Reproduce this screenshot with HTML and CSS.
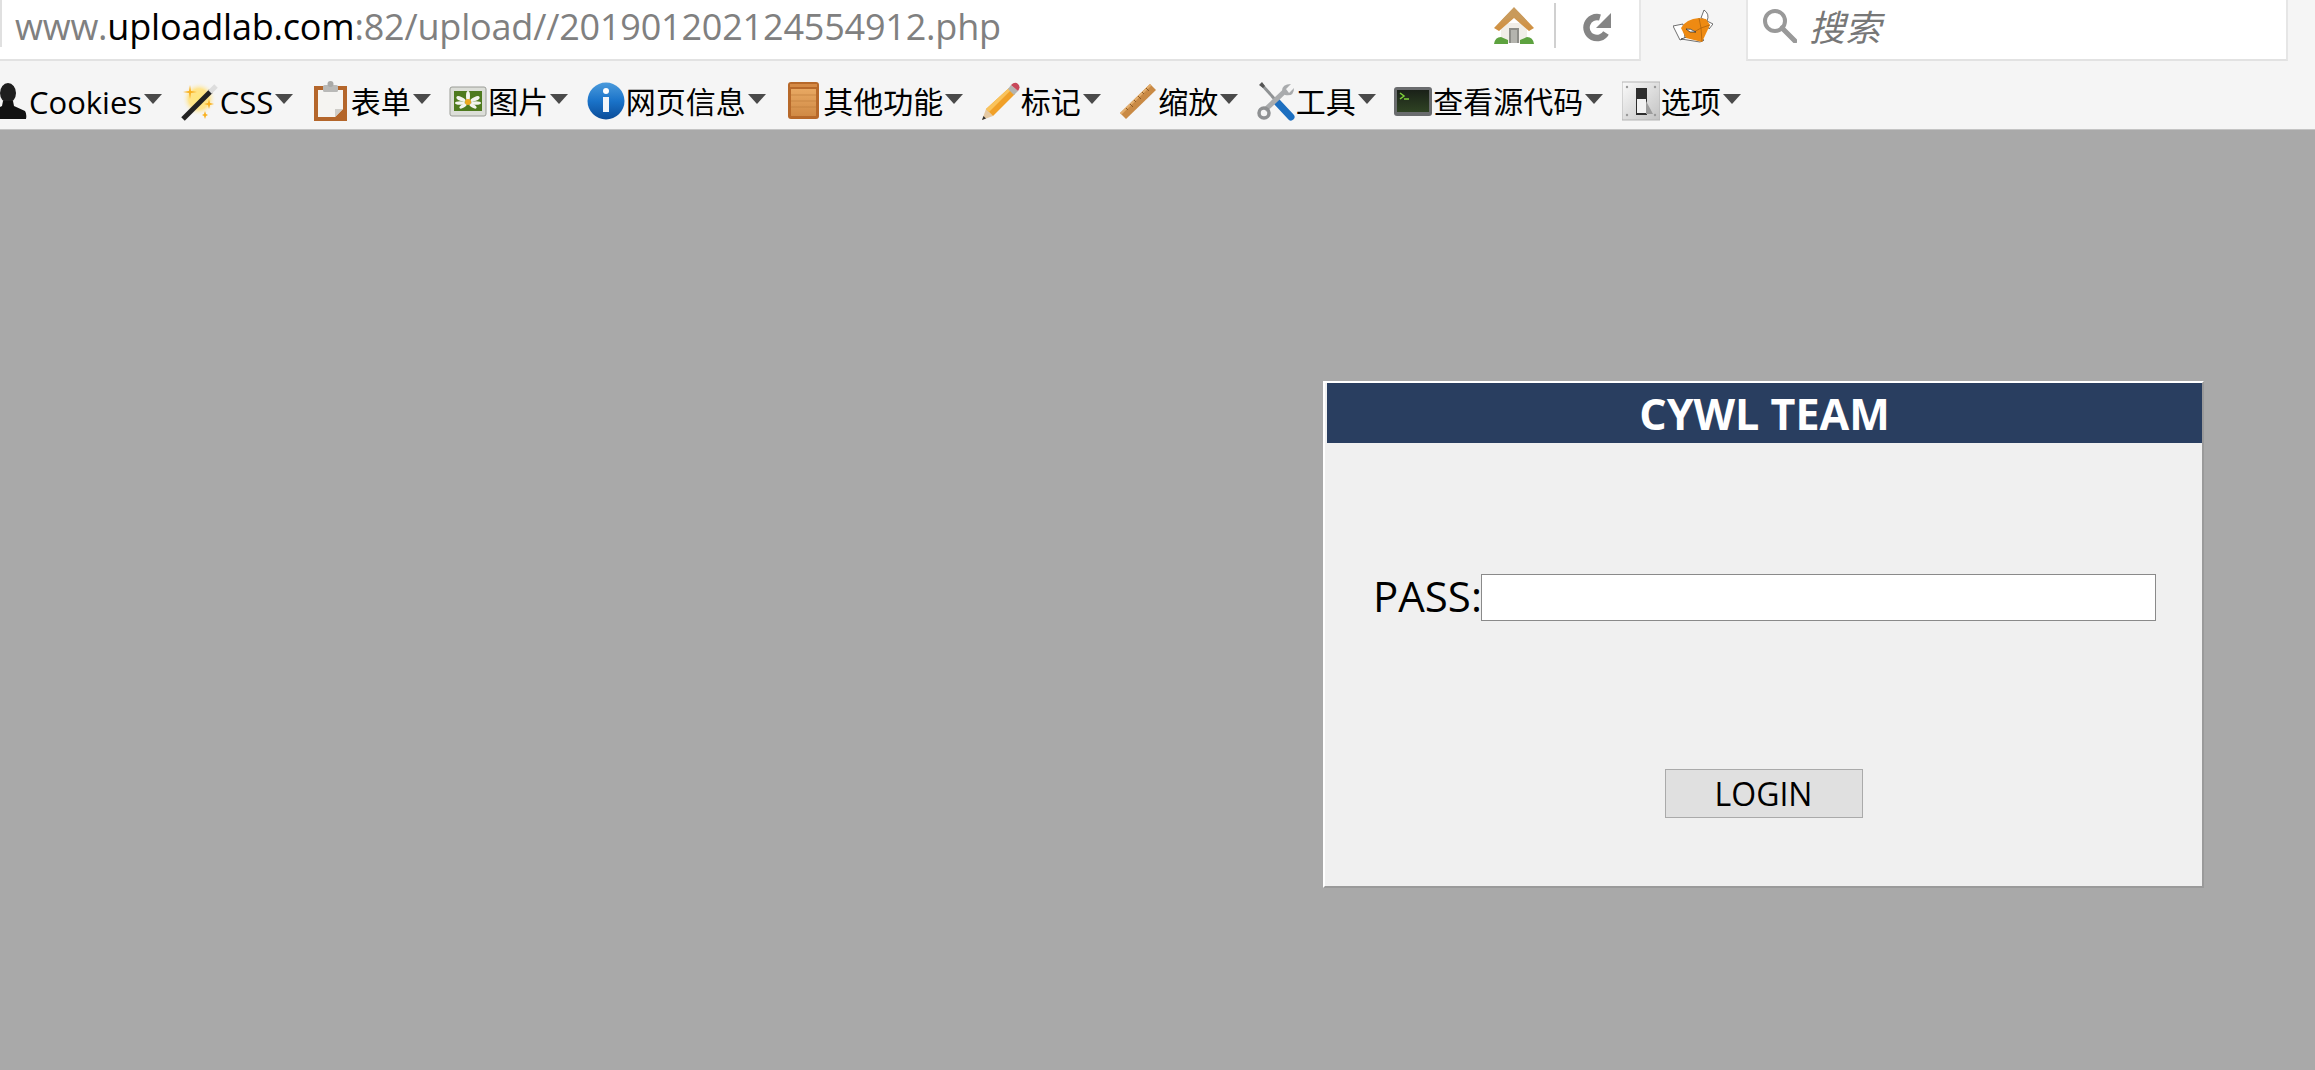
FILE: index.html
```html
<!DOCTYPE html>
<html lang="zh">
<head>
<meta charset="utf-8">
<title>CYWL TEAM</title>
<link rel="stylesheet" href="styles.css">
</head>
<body>
<header class="chrome">
  <div class="navbar">
    <div class="urlbar">
      <div class="url"><span class="dim">www.</span>uploadlab.com<span class="dim">:82/upload//201901202124554912.php</span></div>
      <svg class="home" viewBox="0 0 40 37"><defs><linearGradient id="roof" x1="0" y1="0" x2="0" y2="1"><stop offset="0" stop-color="#c9a067"/><stop offset="1" stop-color="#d18f3e"/></linearGradient></defs><rect x="7" y="16" width="26" height="20" fill="#f1eee8"/><rect x="15" y="21" width="10" height="15" fill="#8d8d88"/><rect x="17" y="23" width="6" height="13" fill="#b4b4ae"/><path d="M20 0 L40 21 L35 24 L20 11 L5 24 L0 21Z" fill="url(#roof)"/><path d="M20 1 L33 14 L20 10 L7 14Z" fill="#c99a5b"/><path d="M0 37 Q1 30 7 30 L14 33 V37Z M40 37 Q39 30 33 30 L26 33 V37Z" fill="#5da23f"/></svg>
      <span class="sep"></span>
      <svg class="reload" viewBox="0 0 29 29"><path d="M24 20 A10.5 10.5 0 1 1 18 4.5" fill="none" stroke="#858585" stroke-width="6.5"/><path d="M29 0 V15 H14Z" fill="#858585"/></svg>
    </div>
    <div class="foxslot">
      <svg class="fox" viewBox="0 0 40 34"><path d="M0 17 L10 15 L12 29 L7 31Z" fill="#fff" stroke="#333" stroke-width=".7"/><path d="M28 9 L31 1 Q37 5 34 12 Z" fill="#fff" stroke="#333" stroke-width=".7"/><path d="M34 12 L40 15 L36 20Z" fill="#fff" stroke="#333" stroke-width=".7"/><path d="M8 30 L27 33 L31 31 L14 28Z" fill="#fff" stroke="#333" stroke-width=".7"/><path d="M8 19 Q13 10 26 9 L33 10 L37 16 L29 33 L13 29Z" fill="#ee8a12"/><path d="M26 9 L28 19 L37 16 M21 23 L28 19 L29 33" fill="none" stroke="#a85f0c" stroke-width=".7"/><path d="M13 20 Q17 19 23 23 L17 23Z" fill="#fff" stroke="#333" stroke-width=".8"/></svg>
    </div>
    <div class="searchbar">
      <svg class="glass" viewBox="0 0 34 34"><circle cx="12" cy="12" r="10" fill="none" stroke="#999" stroke-width="4"/><path d="M19 19 L32 32" stroke="#999" stroke-width="5" stroke-linecap="round"/></svg>
      <span class="search-text">搜索</span>
    </div>
  </div>
  <nav class="toolbar">
    <div class="item first">
      <svg class="icon" viewBox="0 0 38 40"><ellipse cx="18" cy="12" rx="8" ry="10" fill="#1e1e1e"/><path d="M13 20 H23 L24 25 L35 30 Q37 33 36 38 H1 Q0 33 2 30 L12 25Z" fill="#111"/></svg>
      <span class="label latin">Cookies</span><svg class="caret" viewBox="0 0 18 10"><path d="M0 0H18L9 10Z"/></svg>
    </div>
    <div class="item">
      <svg class="icon" viewBox="0 0 38 40"><defs><radialGradient id="glow"><stop offset="0" stop-color="#ffe87a"/><stop offset=".6" stop-color="#ffe48c"/><stop offset="1" stop-color="#f5f5f5" stop-opacity="0"/></radialGradient></defs><circle cx="18" cy="18" r="17" fill="url(#glow)"/><path d="M9 4 L10 10 L16 11 L10 12 L9 18 L8 12 L2 11 L8 10Z M28 18 L29 22 L33 23 L29 24 L28 28 L27 24 L23 23 L27 22Z M24 30 L25 33 L27 34 L25 35 L24 38 L23 35 L21 34 L23 33Z" fill="#f9b11f"/><path d="M2 38 L30 10" stroke="#222" stroke-width="5"/><path d="M29 11 L35 5" stroke="#ddd" stroke-width="5"/></svg>
      <span class="label latin">CSS</span><svg class="caret" viewBox="0 0 18 10"><path d="M0 0H18L9 10Z"/></svg>
    </div>
    <div class="item">
      <svg class="icon" viewBox="0 0 38 40"><rect x="2" y="5" width="33" height="35" fill="#b4662b"/><path d="M6 9 H31 V28 L23 36 H6Z" fill="#f5f4f1"/><path d="M31 28 L23 36 V28Z" fill="#cfcdc8"/><rect x="11" y="4" width="15" height="7" rx="1.5" fill="#b9b9b7"/><circle cx="18.500" cy="3" r="3" fill="#a9a9a7"/></svg>
      <span class="label">表单</span><svg class="caret" viewBox="0 0 18 10"><path d="M0 0H18L9 10Z"/></svg>
    </div>
    <div class="item">
      <svg class="icon" viewBox="0 0 38 40"><rect x="1" y="6" width="36" height="29" rx="2" fill="#dcded8" stroke="#9a9c96"/><rect x="5" y="10" width="28" height="20" fill="#4e7a1e"/><g fill="#f4f4ee"><ellipse cx="19" cy="15" rx="2" ry="5"/><ellipse cx="12" cy="18" rx="5" ry="2" transform="rotate(25 12 18)"/><ellipse cx="26" cy="18" rx="5" ry="2" transform="rotate(-25 26 18)"/><ellipse cx="11" cy="22" rx="5" ry="1.800"/><ellipse cx="27" cy="22" rx="5" ry="1.800"/><ellipse cx="14" cy="25" rx="4" ry="1.800" transform="rotate(-30 14 25)"/><ellipse cx="24" cy="25" rx="4" ry="1.800" transform="rotate(30 24 25)"/></g><circle cx="19" cy="21" r="3" fill="#eea91e"/></svg>
      <span class="label">图片</span><svg class="caret" viewBox="0 0 18 10"><path d="M0 0H18L9 10Z"/></svg>
    </div>
    <div class="item">
      <svg class="icon" viewBox="0 0 38 40"><defs><linearGradient id="info" x1="0" y1="0" x2="0" y2="1"><stop offset="0" stop-color="#4b9bdc"/><stop offset=".5" stop-color="#1a73c9"/><stop offset="1" stop-color="#0b4c98"/></linearGradient></defs><circle cx="19" cy="20" r="18.500" fill="url(#info)"/><circle cx="19" cy="10" r="3" fill="#fff"/><rect x="16" y="16" width="6" height="15" fill="#f2f6fa"/></svg>
      <span class="label">网页信息</span><svg class="caret" viewBox="0 0 18 10"><path d="M0 0H18L9 10Z"/></svg>
    </div>
    <div class="item">
      <svg class="icon" viewBox="0 0 38 40"><defs><linearGradient id="crate" x1="0" y1="0" x2="0" y2="1"><stop offset="0" stop-color="#e8a862"/><stop offset="1" stop-color="#d08a45"/></linearGradient></defs><rect x="4" y="1" width="31" height="37" rx="3" fill="#b7692a"/><rect x="7" y="8" width="25" height="27" fill="url(#crate)"/><path d="M7 14H32M7 20H32M7 26H32" stroke="#c07e3c" stroke-width=".7"/><rect x="6" y="3" width="27" height="3" fill="#d58a45"/></svg>
      <span class="label">其他功能</span><svg class="caret" viewBox="0 0 18 10"><path d="M0 0H18L9 10Z"/></svg>
    </div>
    <div class="item">
      <svg class="icon" viewBox="0 0 38 40"><path d="M0 39 L4 28 L11 35Z" fill="#e5c9a3"/><path d="M0 39 L1.500 35 L4 37.500Z" fill="#333"/><path d="M4 28 L27 7 L33 13 L11 35Z" fill="#f0a028"/><path d="M4 28 L27 7 L29 9 L7 31Z" fill="#f9c35c"/><path d="M26 8 L29 4 L36 10 L32 14Z" fill="#b4b4b0"/><path d="M29 4 Q33 0 36 3 Q39 6 36 10Z" fill="#c8485a"/></svg>
      <span class="label">标记</span><svg class="caret" viewBox="0 0 18 10"><path d="M0 0H18L9 10Z"/></svg>
    </div>
    <div class="item">
      <svg class="icon" viewBox="0 0 38 40"><path d="M1 32 L31 3 L37 9 L7 38Z" fill="#c98a45"/><path d="M1 32 L31 3 L32.500 4.500 L2.500 33.500Z" fill="#e2ad6c"/><path d="M27 7l3 3M23 11l2 2M19 15l3 3M15 19l2 2M11 23l3 3M7 27l2 2" stroke="#8c5a25" stroke-width="1"/></svg>
      <span class="label">缩放</span><svg class="caret" viewBox="0 0 18 10"><path d="M0 0H18L9 10Z"/></svg>
    </div>
    <div class="item">
      <svg class="icon" viewBox="0 0 38 40"><path d="M5 4 L23 24" stroke="#8f9294" stroke-width="3"/><path d="M2 4 L5 1 L8 5 L6 7Z" fill="#555"/><path d="M20 21 L34 36" stroke="#1d6fc0" stroke-width="7" stroke-linecap="round"/><path d="M8 29 L28 10" stroke="#a9abad" stroke-width="5"/><circle cx="7" cy="32" r="5" fill="none" stroke="#8e9092" stroke-width="3.500"/><path d="M25 10 Q25 3 34 3 L29 8 L32 12 L37 7 Q37 16 28 14Z" fill="#a9abad"/></svg>
      <span class="label">工具</span><svg class="caret" viewBox="0 0 18 10"><path d="M0 0H18L9 10Z"/></svg>
    </div>
    <div class="item">
      <svg class="icon" viewBox="0 0 38 40"><defs><linearGradient id="term" x1="0" y1="0" x2="0" y2="1"><stop offset="0" stop-color="#1a2118"/><stop offset="1" stop-color="#2f4323"/></linearGradient></defs><rect x="0" y="6" width="38" height="29" rx="3" fill="#6a6c6e"/><rect x="3" y="9" width="32" height="22" fill="url(#term)"/><path d="M6 12 L10 15 L6 18" fill="none" stroke="#7fd23a" stroke-width="1.500"/><path d="M10 18 H15" stroke="#7fd23a" stroke-width="1.500"/></svg>
      <span class="label">查看源代码</span><svg class="caret" viewBox="0 0 18 10"><path d="M0 0H18L9 10Z"/></svg>
    </div>
    <div class="item">
      <svg class="icon" viewBox="0 0 38 40"><defs><linearGradient id="plate" x1="0" y1="0" x2="1" y2="1"><stop offset="0" stop-color="#fafafa"/><stop offset="1" stop-color="#c2c2c2"/></linearGradient></defs><rect x="0" y="1" width="38" height="38" fill="url(#plate)" stroke="#b5b5b5"/><rect x="14" y="7" width="11" height="27" fill="#2d2d2d"/><rect x="15" y="18" width="9" height="14" fill="#f2f2f2"/><path d="M24 20 L31 33 H24Z" fill="#9c9c9c"/><circle cx="5" cy="6" r="1.200" fill="#999"/><circle cx="33" cy="6" r="1.200" fill="#999"/><circle cx="5" cy="34" r="1.200" fill="#999"/><circle cx="33" cy="34" r="1.200" fill="#999"/></svg>
      <span class="label">选项</span><svg class="caret" viewBox="0 0 18 10"><path d="M0 0H18L9 10Z"/></svg>
    </div>
  </nav>
</header>
<main class="stage">
  <form class="panel">
    <h1 class="panel-title">CYWL TEAM</h1>
    <div class="pass-row">
      <label class="pass-label" for="pass">PASS:</label>
      <input class="pass-input" id="pass" type="password">
    </div>
    <div class="login-row"><button class="login" type="button">LOGIN</button></div>
  </form>
</main>
</body>
</html>
```
FILE: styles.css
```css
* { box-sizing: border-box; }
html, body { margin: 0; height: 100%; overflow: hidden; }
body {
  display: flex;
  flex-direction: column;
  font-family: "Open Sans", "Noto Sans CJK SC", sans-serif;
  background: #a9a9a9;
  color: #000;
}
.chrome { background: #f5f5f5; border-bottom: 1px solid #c4c4c4; }
.navbar { display: flex; height: 61px; }
.urlbar {
  width: 1641px;
  background: #fff;
  border-right: 2px solid #e6e6e6;
  border-bottom: 2px solid #e2e2e2;
  display: flex;
  align-items: flex-start;
  position: relative;
}
.urlbar::before {
  content: "";
  position: absolute;
  left: 0; top: 0;
  width: 2px; height: 47px;
  background: #e0e0e0;
}
.url {
  width: 1494px;
  padding-left: 15px;
  font-size: 36px;
  line-height: 58px;
  margin-top: -2px;
  white-space: nowrap;
  letter-spacing: -0.2px;
}
.dim { color: #808080; }
.home { width: 40px; height: 37px; margin-top: 7px; }
.sep { width: 2px; height: 45px; margin: 3px 0 0 20px; background: #d0d0d0; }
.reload { width: 29px; height: 29px; margin: 13px 0 0 26px; }
.foxslot { width: 105px; padding: 9px 0 0 32px; }
.fox { display: block; width: 40px; height: 34px; }
.searchbar {
  width: 542px;
  background: #fff;
  border-left: 2px solid #e6e6e6;
  border-right: 2px solid #e6e6e6;
  border-bottom: 2px solid #e2e2e2;
  display: flex;
  align-items: flex-start;
  padding-left: 15px;
}
.glass { width: 34px; height: 34px; margin-top: 9px; }
.search-text {
  margin-left: 12px;
  font-size: 36px;
  line-height: 56px;
  font-style: italic;
  color: #777;
}
.toolbar {
  display: flex;
  align-items: center;
  gap: 18.5px;
  height: 68px;
  padding: 20px 0 8px;
  margin-left: -10px;
}
.item { display: flex; align-items: center; height: 40px; flex: none; }
.icon { width: 38px; height: 40px; flex: none; margin-right: 1px; }
.label { font-size: 30px; line-height: 40px; white-space: nowrap; padding-top: 2px; }
.latin { font-size: 31px; }
.caret { width: 18px; height: 10px; margin: -4px 0 0 2px; fill: #4a4a4a; }
.stage { flex: 1; padding: 251px 0 0 1323px; }
.panel {
  width: 881px;
  height: 507px;
  background: #f0f0f0;
  border-top: 2px solid #fff;
  border-left: 2px solid #fff;
  border-right: 2px solid #9a9a9a;
  border-bottom: 2px solid #9a9a9a;
  padding-left: 2px;
}
.panel-title {
  margin: 0;
  height: 60px;
  background: #293e60;
  color: #fff;
  font-size: 43px;
  font-weight: 700;
  line-height: 62px;
  text-align: center;
  overflow: hidden;
}
.pass-row { display: flex; align-items: flex-start; padding: 131px 0 0 46px; }
.pass-label { font-size: 42px; line-height: 44px; width: 108px; flex: none; white-space: nowrap; }
.pass-input {
  width: 675px;
  height: 47px;
  background: #fff;
  border: 1px solid #8a8a8a;
  padding: 0;
}
.login-row { display: flex; justify-content: center; padding: 148px 2px 0 0; }
.login {
  width: 198px;
  height: 49px;
  background: #e0e0e0;
  border: 1px solid #aaa;
  font-family: inherit;
  font-size: 32px;
  color: #000;
  padding: 0;
}
```
